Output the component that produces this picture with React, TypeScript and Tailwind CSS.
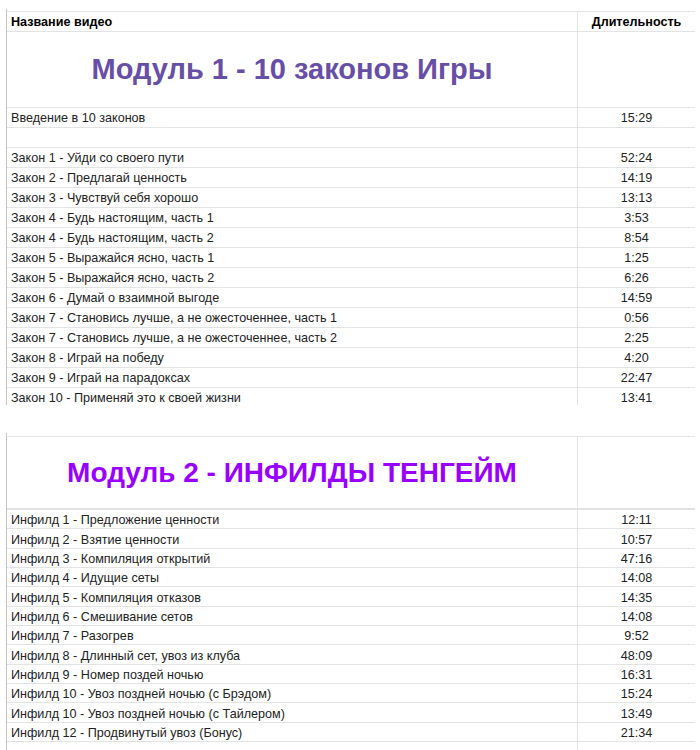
import React from "react";

const m1: [string, string][] = [
  ["Закон 1 - Уйди со своего пути", "52:24"],
  ["Закон 2 - Предлагай ценность", "14:19"],
  ["Закон 3 - Чувствуй себя хорошо", "13:13"],
  ["Закон 4 - Будь настоящим, часть 1", "3:53"],
  ["Закон 4 - Будь настоящим, часть 2", "8:54"],
  ["Закон 5 - Выражайся ясно, часть 1", "1:25"],
  ["Закон 5 - Выражайся ясно, часть 2", "6:26"],
  ["Закон 6 - Думай о взаимной выгоде", "14:59"],
  ["Закон 7 - Становись лучше, а не ожесточеннее, часть 1", "0:56"],
  ["Закон 7 - Становись лучше, а не ожесточеннее, часть 2", "2:25"],
  ["Закон 8 - Играй на победу", "4:20"],
  ["Закон 9 - Играй на парадоксах", "22:47"],
  ["Закон 10 - Применяй это к своей жизни", "13:41"],
];

const m2: [string, string][] = [
  ["Инфилд 1 - Предложение ценности", "12:11"],
  ["Инфилд 2 - Взятие ценности", "10:57"],
  ["Инфилд 3 - Компиляция открытий", "47:16"],
  ["Инфилд 4 - Идущие сеты", "14:08"],
  ["Инфилд 5 - Компиляция отказов", "14:35"],
  ["Инфилд 6 - Смешивание сетов", "14:08"],
  ["Инфилд 7 - Разогрев", "9:52"],
  ["Инфилд 8 - Длинный сет, увоз из клуба", "48:09"],
  ["Инфилд 9 - Номер поздей ночью", "16:31"],
  ["Инфилд 10 - Увоз поздней ночью (с Брэдом)", "15:24"],
  ["Инфилд 10 - Увоз поздней ночью (с Тайлером)", "13:49"],
  ["Инфилд 12 - Продвинутый увоз (Бонус)", "21:34"],
  ["", ""],
];

function Row({
  name,
  dur,
  h,
  pt,
  bold,
}: {
  name: string;
  dur: string;
  h: string;
  pt: string;
  bold?: boolean;
}) {
  const tone = bold ? "font-bold text-black" : "text-[#222222]";
  return (
    <div className={`flex border-b border-[#e2e3e3] ${h} shrink-0`}>
      <div
        className={`w-[571px] shrink-0 border-r border-[#e2e3e3] pl-[4px] ${pt} flex items-center whitespace-nowrap ${tone}`}
      >
        {name}
      </div>
      <div className={`flex-1 ${pt} flex items-center justify-center ${tone}`}>
        {dur}
      </div>
    </div>
  );
}

export default function App() {
  return (
    <div
      className="w-[700px] h-[750px] bg-white overflow-hidden pl-[6px] text-[12.6px] leading-none"
      style={{ fontFamily: '"Liberation Sans", Arial, sans-serif' }}
    >
      {/* Block 1 */}
      <div className="mt-[9px] w-[689px] h-[396px] overflow-hidden border-l border-[#c6c6c6] pt-[2px] flex flex-col">
        <div className="border-t border-[#e2e3e3]">
          <Row name="Название видео" dur="Длительность" h="h-[20px]" pt="pt-[2px]" bold />
        </div>
        <div className="flex border-b border-[#e2e3e3] h-[76px] shrink-0">
          <div className="w-[571px] shrink-0 border-r border-[#e2e3e3] flex items-center justify-center text-[29px] font-bold text-[#674ea7]">
            Модуль 1 - 10 законов Игры
          </div>
          <div className="flex-1" />
        </div>
        <Row name="Введение в 10 законов" dur="15:29" h="h-[20px]" pt="pt-[2px]" />
        <Row name="" dur="" h="h-[20px]" pt="pt-[2px]" />
        {m1.map(([n, d], i) => (
          <Row key={i} name={n} dur={d} h="h-[20px]" pt="pt-[2px]" />
        ))}
      </div>

      {/* Block 2 */}
      <div className="mt-[28px] w-[689px] h-[400px] border-l border-[#c6c6c6] pt-[3px] flex flex-col">
        <div className="flex border-t border-b-2 border-[#e2e3e3] h-[74px] shrink-0">
          <div className="w-[571px] shrink-0 border-r border-[#e2e3e3] flex items-center justify-center text-[28px] font-bold text-[#9900ff]">
            Модуль 2 - ИНФИЛДЫ ТЕНГЕЙМ
          </div>
          <div className="flex-1" />
        </div>
        {m2.map(([n, d], i) => (
          <Row key={i} name={n} dur={d} h="h-[19.35px]" pt="pt-[3px]" />
        ))}
      </div>
    </div>
  );
}
